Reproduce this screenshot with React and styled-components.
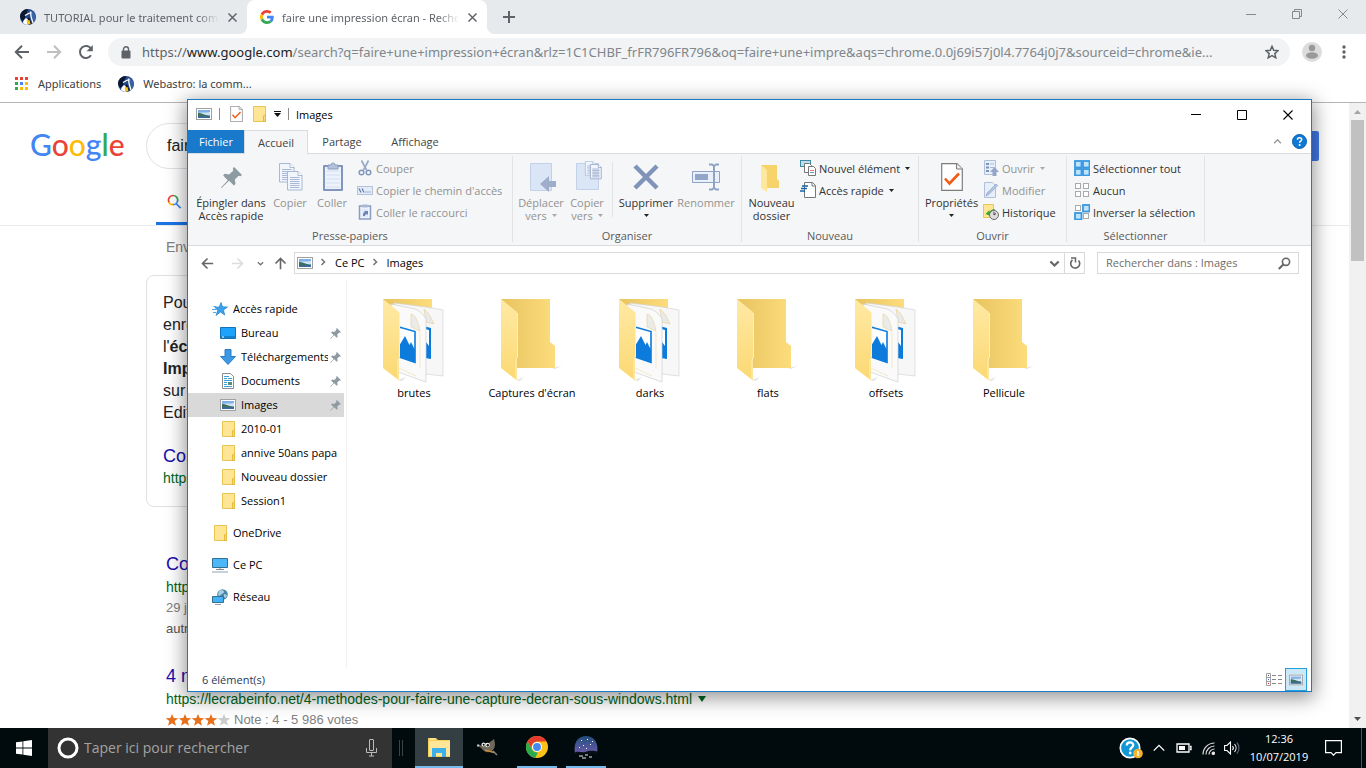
import styled, { createGlobalStyle, css } from "styled-components";

const GlobalStyle = createGlobalStyle`
  * { box-sizing: border-box; }
  body { margin: 0; background: #fff; }
  button, input { font: inherit; color: inherit; }
  button { border: 0; background: none; padding: 0; }
  h3, p, ul { margin: 0; padding: 0; font-weight: normal; }
  ul { list-style: none; }
  a { text-decoration: none; color: inherit; }
  svg { display: block; flex: none; }
`

const ui = `"Open Sans", "Noto Sans", sans-serif`
const noto = `"Noto Sans", "Open Sans", sans-serif`
const arial = `"Liberation Sans", Arial, sans-serif`

const Desktop = styled.div`
  position: relative;
  display: flex;
  flex-direction: column;
  height: 100vh;
  overflow: hidden;
  font-family: ${ui};
  font-size: 11px;
`

/* ---------- Chrome ---------- */

const Browser = styled.div`
  flex: 1;
  min-height: 0;
  display: flex;
  flex-direction: column;
`

const TabStrip = styled.div`
  display: flex;
  align-items: center;
  height: 34px;
  padding-left: 7px;
  background: #e7eaed;
  color: #5f6368;
`

const BrowserTab = styled.div`
  position: relative;
  display: flex;
  align-items: center;
  width: 240px;
  height: 34px;
  padding: 0 10px 0 13px;
  gap: 8px;
  ${p => p.$active && css`
    background: #fff;
    border-radius: 8px 8px 0 0;
    &::before, &::after {
      content: "";
      position: absolute;
      bottom: 0;
      width: 8px;
      height: 8px;
    }
    &::before {
      left: -8px;
      background: radial-gradient(circle at 0 0, transparent 8px, #fff 8px);
    }
    &::after {
      right: -8px;
      background: radial-gradient(circle at 100% 0, transparent 8px, #fff 8px);
    }
  `}
`

const TabTitle = styled.span`
  flex: 1;
  overflow: hidden;
  white-space: nowrap;
  font-family: ${noto};
  mask-image: linear-gradient(90deg, #000 88%, transparent);
`

const IconButton = styled.button`
  display: flex;
  align-items: center;
  justify-content: center;
  flex: none;
  width: ${p => p.$w || 16}px;
  height: ${p => p.$h || 16}px;
`

const CaptionButtons = styled.div`
  display: flex;
  align-self: flex-start;
  margin-left: auto;
`

const Toolbar = styled.div`
  display: flex;
  align-items: center;
  height: 36px;
  padding: 0 4px 0 6px;
`

const Omnibox = styled.div`
  display: flex;
  align-items: center;
  flex: 1;
  min-width: 0;
  height: 28px;
  margin: 0 8px 0 6px;
  padding: 0 11px 0 13px;
  gap: 11px;
  border-radius: 14px;
  background: #f1f3f4;
  font-family: ${noto};
  font-size: 13px;
  color: #80868b;
`

const Url = styled.span`
  flex: 1;
  overflow: hidden;
  white-space: nowrap;
  text-overflow: ellipsis;
  b { font-weight: normal; color: #202124; }
  i { font-style: normal; color: #5f6368; }
`

const Bookmarks = styled.div`
  display: flex;
  align-items: center;
  height: 33px;
  padding: 0 15px 5px;
  gap: 17px;
  border-bottom: 1px solid #b6b4b6;
  font-family: ${noto};
  color: #3c4043;
`

const Bookmark = styled.a`
  display: flex;
  align-items: center;
  gap: 9px;
`

const Viewport = styled.div`
  flex: 1;
  min-height: 0;
  display: flex;
`

const Page = styled.main`
  flex: 1;
  min-width: 0;
  overflow: hidden;
  font-family: ${arial};
  font-size: 14px;
`

const GoogleHeader = styled.header`
  display: flex;
  align-items: center;
  height: 83px;
  padding: 2px 30px 0;
`

const GoogleLogo = styled.a`
  width: 116px;
  padding-bottom: 3px;
  font-family: Lato, sans-serif;
  font-size: 30px;
  font-weight: 500;
  line-height: 36px;
`

const Letter = styled.span`
  color: ${p => p.$c};
`

const GoogleField = styled.input`
  flex: 1;
  min-width: 0;
  height: 46px;
  padding: 0 20px;
  border: 1px solid #dfe1e5;
  border-radius: 23px;
  font-size: 16px;
  color: #222;
`

const SignIn = styled.button`
  width: 60px;
  height: 30px;
  margin-left: 40px;
  border-radius: 2px;
  background: #4279e8;
`

const GoogleTabs = styled.nav`
  display: flex;
  height: 40px;
  padding-left: 156px;
  border-bottom: 1px solid #ebebeb;
`

const GoogleTab = styled.a`
  display: flex;
  align-items: center;
  width: 72px;
  padding: 0 0 5px 11px;
  border-bottom: 3px solid #1a73e8;
`

const Results = styled.div`
  display: flex;
  flex-direction: column;
  padding-left: 166px;
  white-space: nowrap;
`

const Stats = styled.p`
  height: 49px;
  line-height: 43px;
  color: #808080;
`

const Snippet = styled.section`
  width: 652px;
  height: 232px;
  margin: 0 0 44px -20px;
  padding: 16px;
  border: 1px solid #dfe1e5;
  border-radius: 8px;
  font-size: 16px;
  line-height: 22px;
  color: #222;
  span { display: block; }
`

const Result = styled.section`
  margin-bottom: 24px;
  h3 { font-size: 18px; line-height: 26px; color: #1a0dab; }
`

const ResultUrl = styled.p`
  display: flex;
  align-items: center;
  gap: 6px;
  font-size: 14px;
  line-height: 20px;
  color: #006621;
`

const ResultText = styled.p`
  display: flex;
  align-items: center;
  gap: 3px;
  font-size: 13px;
  line-height: 21px;
  color: ${p => (p.$dim ? "#808080" : "#545454")};
`

const SnippetLink = styled.div`
  margin-top: 20px;
  h3 { font-size: 18px; line-height: 24px; color: #1a0dab; }
`

const ScrollBar = styled.div`
  display: flex;
  flex-direction: column;
  align-items: center;
  justify-content: space-between;
  width: 17px;
  background: #f1f1f1;
`

const ScrollTop = styled.div`
  display: flex;
  flex-direction: column;
  align-items: center;
`

const Thumb = styled.div`
  width: 13px;
  height: 141px;
  background: #c1c1c1;
`

/* ---------- Explorer ---------- */

const Explorer = styled.section`
  position: absolute;
  top: 99px;
  right: 54px;
  bottom: 76px;
  left: 187px;
  display: flex;
  flex-direction: column;
  border: 1px solid #1979ca;
  background: #fff;
  color: #000;
  box-shadow: 0 4px 18px 2px rgba(0, 0, 0, 0.42);
`

const TitleBar = styled.div`
  display: flex;
  align-items: center;
  height: 30px;
  padding: 0 0 2px 8px;
`

const Divider = styled.span`
  width: 1px;
  height: 12px;
  margin: 0 ${p => p.$gap}px;
  background: #8c8c8c;
`

const RibbonTabs = styled.div`
  display: flex;
  align-items: flex-end;
  height: 24px;
  border-bottom: 1px solid #dadbdc;
`

const RibbonTab = styled.button`
  height: 23px;
  width: ${p => p.$w}px;
  color: #444;
  ${p => p.$file && css`
    background: #1979ca;
    color: #fff;
  `}
  ${p => p.$active && css`
    height: 24px;
    margin-bottom: -1px;
    border: 1px solid #dadbdc;
    border-bottom: 0;
    background: #f5f6f7;
  `}
`

const TabsEnd = styled.div`
  display: flex;
  align-items: center;
  gap: 10px;
  height: 24px;
  margin-left: auto;
  padding-right: 4px;
`

const Ribbon = styled.div`
  display: flex;
  height: 92px;
  padding: 2px 0 3px;
  border-bottom: 1px solid #dadbdc;
  background: #f5f6f7;
`

const Group = styled.div`
  display: flex;
  flex-direction: column;
  justify-content: space-between;
  width: ${p => p.$w}px;
  border-right: 1px solid #e2e3e4;
`

const GroupBody = styled.div`
  display: flex;
  padding: 1px 4px 0;
`

const GroupLabel = styled.div`
  line-height: 12px;
  text-align: center;
  color: #5a5a5a;
`

const BigButton = styled.button`
  display: flex;
  flex-direction: column;
  align-items: center;
  width: ${p => p.$w}px;
  padding-top: 4px;
  gap: 3px;
  line-height: 13px;
  white-space: nowrap;
  color: ${p => (p.disabled ? "#929292" : "#333")};
`

const BigLabel = styled.span`
  display: flex;
  flex-direction: column;
  align-items: center;
`

const WithArrow = styled.span`
  display: flex;
  align-items: center;
  justify-content: center;
  gap: 5px;
  min-height: 13px;
`

const Column = styled.div`
  display: flex;
  flex-direction: column;
`

const SmallButton = styled.button`
  display: flex;
  align-items: center;
  height: 22px;
  gap: 3px;
  padding: 0 3px;
  white-space: nowrap;
  color: ${p => (p.disabled ? "#929292" : "#333")};
`

const RibbonSplit = styled.span`
  width: 1px;
  height: 55px;
  margin: 5px 3px 0;
  background: #e2e3e4;
`

const AddressRow = styled.div`
  display: flex;
  align-items: center;
  height: 34px;
  padding: 0 12px 0 6px;
`

const Address = styled.div`
  display: flex;
  align-items: center;
  flex: 1;
  height: 22px;
  margin-right: 12px;
  padding-left: 2px;
  border: 1px solid #d9d9d9;
`

const Crumb = styled.a`
  padding-bottom: 2px;
`

const CrumbArrow = styled.button`
  padding: 0 8px 2px 6px;
`

const Refresh = styled.button`
  display: flex;
  align-items: center;
  justify-content: center;
  width: 20px;
  height: 20px;
  border-left: 1px solid #d9d9d9;
`

const SearchBox = styled.label`
  display: flex;
  align-items: center;
  width: 202px;
  height: 22px;
  padding: 0 7px 0 8px;
  border: 1px solid #d9d9d9;
`

const SearchInput = styled.input`
  flex: 1;
  min-width: 0;
  padding: 0 0 1px;
  border: 0;
  background: none;
  &::placeholder { color: ${p => p.$hint}; opacity: 1; }
`

const Body = styled.div`
  flex: 1;
  min-height: 0;
  display: flex;
`

const Nav = styled.nav`
  width: 159px;
  padding: 17px 2px 0 0;
  border-right: 1px solid #f2f2f2;
`

const NavRow = styled.a`
  display: flex;
  align-items: center;
  height: 24px;
  padding: 0 3px 0 ${p => (p.$root ? 24 : 32)}px;
  gap: 5px;
  margin-top: ${p => (p.$spaced ? 8 : 0)}px;
  background: ${p => (p.$selected ? "#d9d9d9" : "none")};
`

const NavLabel = styled.span`
  flex: 1;
  margin-right: -3px;
  padding-bottom: 2px;
  overflow: hidden;
  white-space: nowrap;
`

const Files = styled.ul`
  flex: 1;
  display: flex;
  flex-wrap: wrap;
  align-content: flex-start;
  padding: 18px 8px;
`

const FileItem = styled.li`
  display: flex;
  flex-direction: column;
  align-items: center;
  width: 118px;
  gap: 2px;
  line-height: 16px;
`

const StatusBar = styled.div`
  display: flex;
  align-items: center;
  height: 23px;
  padding: 0 4px 0 14px;
  color: #1e395b;
`

const ViewButton = styled.button`
  display: flex;
  align-items: center;
  justify-content: center;
  width: 22px;
  height: 23px;
  border: 1px solid ${p => (p.$on ? "#26a0da" : "transparent")};
  background: ${p => (p.$on ? "#cce8f6" : "none")};
`

const ViewButtons = styled.div`
  display: flex;
  margin-left: auto;
`

/* ---------- Taskbar ---------- */

const Taskbar = styled.footer`
  display: flex;
  align-items: stretch;
  height: 40px;
  background: #010b0e;
  color: #fff;
`

const StartButton = styled.button`
  display: flex;
  align-items: center;
  justify-content: center;
  width: 48px;
`

const Cortana = styled.label`
  display: flex;
  align-items: center;
  width: 344px;
  padding: 0 15px 0 9px;
  gap: 5px;
  background: #333;
  font-size: 14px;
  color: #a3a3a3;
`

const Grip = styled.span`
  align-self: center;
  width: 4px;
  height: 16px;
  margin: 0 12px 0 7px;
  border: 1px solid #3b4548;
  border-width: 0 1px;
`

const TaskButton = styled.button`
  display: flex;
  align-items: center;
  justify-content: center;
  width: 48px;
  background: ${p => (p.$active ? "#333f42" : "none")};
  border-bottom: 2px solid ${p => (p.$active ? "#76b9ed" : "transparent")};
`

const RunningButton = styled(TaskButton)`
  width: 40px;
  margin: 0 3px 0 6px;
  border-color: #76b9ed;
`

const Tray = styled.div`
  display: flex;
  align-items: center;
  margin-left: auto;
`

const Clock = styled.div`
  width: 70px;
  text-align: center;
  line-height: 18px;
`

const ShowDesktop = styled.button`
  align-self: stretch;
  width: 5px;
  margin-left: 9px;
  border-left: 1px solid #4d5456;
`

/* ---------- Icons ---------- */

const Caret = ({ color = "#222" }) => (
  <svg width="5" height="3" viewBox="0 0 5 3"><path d="M0 0h5L2.5 3z" fill={color} /></svg>
)

const Chevron = ({ dir = "down", size = 8, color = "#777", w = 1.6 }) => {
  const d = { down: "M1 2.5 4 5.5 7 2.5", right: "M2.5 1 5.5 4 2.5 7", up: "M1 5.5 4 2.5 7 5.5" }[dir]
  return <svg width={size} height={size} viewBox="0 0 8 8"><path d={d} fill="none" stroke={color} strokeWidth={w} /></svg>
}

const Close = ({ size = 9, color = "#5f6368", w = 1.6 }) => (
  <svg width={size} height={size} viewBox="0 0 10 10"><path d="M.5.5l9 9M9.5.5l-9 9" stroke={color} strokeWidth={w} fill="none" /></svg>
)

const Arrow = ({ color = "#5f6368", turn = 0, w = 2, size = 16 }) => (
  <svg width={size} height={size} viewBox="0 0 16 16">
    <g transform={`rotate(${turn} 8 8)`}>
      <path d="M15 8H2M8 1.8 1.8 8 8 14.2" fill="none" stroke={color} strokeWidth={w} />
    </g>
  </svg>
)

const AstroIcon = () => (
  <svg width="16" height="16" viewBox="0 0 16 16">
    <circle cx="8" cy="8" r="8" fill="#24488a" />
    <path d="M0 8a8 8 0 0 1 8-8C7 4 5 7 4 13A8 8 0 0 1 0 8" fill="#0c1730" />
    <path d="M11 1.500a7.500 7.500 0 0 1 3 11.500l-2.500-6z" fill="#3a63a8" />
    <path d="M5 6.500 9.500 4M10.500 4l.8 4.500 1.700 5.500" stroke="#fff" strokeWidth="1.300" fill="none" />
    <path d="M10 2.200l1.800.8-.8 2.800-1.800-1z" fill="#e8eef7" />
    <path d="M7 10.500l2-2.500 2.500 6.500-3.500 1.400z" fill="#101724" />
    <path d="M3.500 11.500 6 9l2 1.500-1 3 1.500 2.400A8 8 0 0 1 3 14z" fill="#fff" />
    <path d="M6.500 11.500l3-.5 1 4-3 .8z" fill="#f5c518" />
  </svg>
)

const GoogleG = () => (
  <svg width="14" height="14" viewBox="0 0 48 48">
    <path fill="#EA4335" d="M24 9.500c3.540 0 6.710 1.220 9.210 3.600l6.850-6.850C35.900 2.380 30.470 0 24 0 14.620 0 6.510 5.380 2.560 13.220l7.980 6.190C12.430 13.720 17.740 9.500 24 9.500z" />
    <path fill="#4285F4" d="M46.980 24.550c0-1.570-.15-3.090-.38-4.550H24v9.020h12.940c-.58 2.960-2.260 5.480-4.780 7.180l7.730 6c4.510-4.180 7.090-10.360 7.090-17.650z" />
    <path fill="#FBBC05" d="M10.530 28.590a14.500 14.500 0 0 1 0-9.180l-7.980-6.190a24 24 0 0 0 0 21.560z" />
    <path fill="#34A853" d="M24 48c6.480 0 11.930-2.130 15.890-5.810l-7.730-6c-2.150 1.450-4.920 2.300-8.160 2.300-6.260 0-11.570-4.220-13.470-9.910l-7.980 6.190C6.510 42.620 14.620 48 24 48z" />
  </svg>
)

const ReloadIcon = () => (
  <svg width="16" height="16" viewBox="0 0 16 16">
    <path d="M13 11.300A6 6 0 1 1 13.200 5" fill="none" stroke="#5f6368" strokeWidth="2" />
    <path d="M14.800 1v6.200H8.600z" fill="#5f6368" />
  </svg>
)

const LockIcon = () => (
  <svg width="10" height="13" viewBox="0 0 10 13">
    <rect x="0.500" y="4.500" width="9" height="8" rx="1" fill="#5f6368" />
    <path d="M2.500 5V3.300a2.500 2.500 0 0 1 5 0V5" fill="none" stroke="#5f6368" strokeWidth="1.400" />
  </svg>
)

const StarOutline = () => (
  <svg width="14" height="14" viewBox="0 0 14 14">
    <path d="M7 1.300l1.700 4 4.300.4-3.200 2.900 1 4.200L7 10.600l-3.800 2.200 1-4.200L1 5.700l4.300-.4z" fill="none" stroke="#5f6368" strokeWidth="1.500" />
  </svg>
)

const Avatar = () => (
  <svg width="20" height="20" viewBox="0 0 20 20">
    <circle cx="10" cy="10" r="10" fill="#dcdcdc" />
    <circle cx="10" cy="6" r="3.200" fill="#999" />
    <ellipse cx="10" cy="13.500" rx="6" ry="3.300" fill="#999" />
  </svg>
)

const DotsIcon = () => (
  <svg width="4" height="14" viewBox="0 0 4 14" fill="#5f6368">
    <circle cx="2" cy="2" r="1.700" /><circle cx="2" cy="7" r="1.700" /><circle cx="2" cy="12" r="1.700" />
  </svg>
)

const AppsIcon = () => {
  const colors = ["#ea4335", "#ea4335", "#ea4335", "#34a853", "#4285f4", "#fbbc05", "#34a853", "#fbbc05", "#fbbc05"]
  return (
    <svg width="14" height="14" viewBox="0 0 14 14">
      {colors.map((c, i) => <rect key={i} x={(i % 3) * 5} y={Math.floor(i / 3) * 5} width="3" height="3" fill={c} />)}
    </svg>
  )
}

const SearchColor = () => (
  <svg width="15" height="15" viewBox="0 0 15 15" fill="none" strokeWidth="1.700">
    <path d="M2.200 8.500A4.600 4.600 0 0 1 6 1.500" stroke="#ea4335" />
    <path d="M6 1.500a4.600 4.600 0 0 1 4.600 5.500" stroke="#34a853" />
    <path d="M10.600 6.500A4.600 4.600 0 0 1 6 10.700M9 9.500l4.700 4.700" stroke="#4285f4" />
    <path d="M6 10.700A4.600 4.600 0 0 1 1.800 8" stroke="#fbbc05" />
  </svg>
)

const Stars = () => (
  <svg width="65" height="12" viewBox="0 0 65 12">
    {[0, 1, 2, 3, 4].map(i => (
      <path key={i} transform={`translate(${i * 13} 0)`} fill={i < 4 ? "#e7711b" : "#ccc"}
        d="M6 0l1.700 4.100 4.600.2-3.600 2.800L10 11.800 6 9.200l-4 2.600L3.300 7.100-.3 4.300l4.600-.2z" />
    ))}
  </svg>
)

const PictureIcon = ({ size = 16 }) => (
  <svg width={size} height={size} viewBox="0 0 16 16">
    <rect x="0.500" y="2.500" width="15" height="11" fill="#fff" stroke="#a0a0a0" />
    <rect x="2" y="4" width="12" height="8" fill="#7fb0e8" />
    <path d="M2 7c4-1 8 0 12-1v3H2z" fill="#cfe4f5" />
    <path d="M2 7c3 0 6 1.500 12 3v2H2z" fill="#3f6f5d" />
    <path d="M2 10.500c4-.5 8 0 12 0V12H2z" fill="#3b6a9c" />
  </svg>
)

const FolderSmall = () => (
  <svg width="16" height="16" viewBox="0 0 16 16">
    <path d="M2.500.500h12v15h-12z" fill="#ffe594" stroke="#e8c552" />
    <path d="M12.500 15.500V10l1-1h1v6.500z" fill="#fadb7a" stroke="#e3b93f" />
  </svg>
)

const CheckDoc = ({ w = 13, h = 16 }) => (
  <svg width={w} height={h} viewBox="0 0 22 28">
    <path d="M.700.700H16l5.300 5.300v21.300H.700z" fill="#fff" stroke="#7d7d7d" strokeWidth="1.200" />
    <path d="M15.500.700V6h6" fill="#eee" stroke="#7d7d7d" />
    <path d="M4 15.500l4.500 5L18 10.500" fill="none" stroke="#f25c19" strokeWidth="2.600" />
  </svg>
)

const CustomizeIcon = () => (
  <svg width="7" height="6" viewBox="0 0 7 6"><path d="M0 0h7v1H0zM0 2h7L3.500 6z" fill="#111" /></svg>
)

const HelpIcon = () => (
  <svg width="15" height="15" viewBox="0 0 15 15">
    <circle cx="7.500" cy="7.500" r="7" fill="#0f78d4" stroke="#0b5ea8" />
    <path d="M5.400 5.700c0-2.700 4.300-2.700 4.300-.2 0 1.600-2.100 1.500-2.100 3.200" fill="none" stroke="#fff" strokeWidth="1.500" />
    <circle cx="7.600" cy="11" r="1" fill="#fff" />
  </svg>
)

const PinIcon = ({ size = 10 }) => (
  <svg width={size} height={size} viewBox="0 0 20 20">
    <path d="M12.500 0 20 7.500l-1.500 1.200-1.700-.3-3.600 3.600.6 4.200-1.500 1.500-4.600-4.600L.5 20 0 19.500l6.500-7L2 8l1.500-1.500 4.200.7 3.900-3.700L11.300 1.300z" fill="#8e9aa2" />
  </svg>
)

const PageLines = ({ x, y, rows = 6, s = "#a7b9d4" }) => (
  <g transform={`translate(${x} ${y})`}>
    <path d="M.500.500H11l4 4v14.500H.500z" fill="#f2f6fc" stroke={s} />
    <path d="M11 .500v4h4" fill="#fff" stroke={s} />
    {Array.from({ length: rows }, (_, i) => <path key={i} d={`M3 ${6.5 + i * 2}h9.500`} stroke={s} />)}
  </g>
)

const CopyIcon = () => (
  <svg width="26" height="28" viewBox="0 0 26 28"><PageLines x={1} y={0} /><PageLines x={9} y={8} /></svg>
)

const PasteIcon = () => (
  <svg width="22" height="30" viewBox="0 0 22 30">
    <rect x="1" y="3" width="20" height="26" rx="1" fill="#8296bd" />
    <rect x="3" y="5" width="16" height="22" fill="#edf3fc" />
    <path d="M4 9h14M4 13h14M4 17h14M4 21h14M4 25h14" stroke="#d0def2" />
    <path d="M6 3h3a2 2 0 0 1 4 0h3v4H6z" fill="#b3c1da" stroke="#8c9dbf" />
  </svg>
)

const ScissorsIcon = () => (
  <svg width="16" height="16" viewBox="0 0 16 16" fill="none">
    <path d="M4.500.500 9.500 10M11.500.500 6.500 10" stroke="#9aabc8" strokeWidth="1.700" />
    <circle cx="4.500" cy="12.500" r="2.300" stroke="#8296bd" strokeWidth="1.500" />
    <circle cx="11.500" cy="12.500" r="2.300" stroke="#8296bd" strokeWidth="1.500" />
  </svg>
)

const PathIcon = () => (
  <svg width="16" height="16" viewBox="0 0 16 16">
    <rect x="0.500" y="4.500" width="15" height="8" fill="#e3ebf7" stroke="#b4c2dc" />
    <path d="M2 6.500l2 4M5 6.500l2 4M8.500 10h1M10.500 10h1M12.500 10h1" stroke="#6279a8" strokeWidth="1.200" />
  </svg>
)

const ShortcutIcon = () => (
  <svg width="16" height="16" viewBox="0 0 16 16">
    <path d="M2.500 2h11v13h-11z" fill="#edf3fc" stroke="#8c9dbf" strokeWidth="1.500" />
    <path d="M5.500.500h5v3h-5z" fill="#a9b8d4" />
    <rect x="5" y="5" width="6" height="8" fill="#dfe8f6" />
    <path d="M6 12c0-3 .500-3.500 2-4L7 7h4v4l-1-1c-1.500 0-2 1-2 2z" fill="#6d83b0" />
  </svg>
)

const MoveIcon = () => (
  <svg width="28" height="30" viewBox="0 0 28 30">
    <path d="M1.500 1.500h21v27h-21z" fill="#dae5f5" stroke="#c3d1e8" />
    <path d="M20 14v5h7v6h-7v5l-9-8z" fill="#9dadca" />
  </svg>
)

const CopyToIcon = () => (
  <svg width="28" height="30" viewBox="0 0 28 30">
    <path d="M1.500 2.500h22v26h-22z" fill="#dae5f5" stroke="#c3d1e8" />
    <g transform="translate(10 0) scale(.7 .75)"><PageLines x={0} y={0} /></g>
    <g transform="translate(15 3) scale(.75 .78)"><PageLines x={0} y={0} s="#8c9fc4" /></g>
  </svg>
)

const DeleteIcon = () => (
  <svg width="28" height="28" viewBox="0 0 28 28"><path d="M3 3l22 22M25 3 3 25" stroke="#8093b8" strokeWidth="4.500" /></svg>
)

const RenameIcon = () => (
  <svg width="28" height="28" viewBox="0 0 28 28">
    <path d="M.500 8.500h27v11H.500z" fill="#e9f0fa" stroke="#8fa3c7" />
    <rect x="3" y="11" width="13" height="6" fill="#93a6ca" />
    <path d="M17 1.500h3l2 1.500 2-1.500h3M17 26.500h3l2-1.500 2 1.500h3M22 3v22" fill="none" stroke="#8fa3c7" strokeWidth="2" />
  </svg>
)

const NewFolderIcon = () => (
  <svg width="20" height="28" viewBox="0 0 20 28">
    <path d="M1 1h16v14l2 2v7H1z" fill="#f6d36b" />
    <path d="M1 1l6 5v22l-6-4z" fill="#ffe89c" />
  </svg>
)

const NewItemIcon = () => (
  <svg width="16" height="16" viewBox="0 0 16 16">
    <rect x="0.500" y="0.500" width="10" height="6" fill="#bfe0ea" stroke="#3f88a3" />
    <path d="M4.500 3.500h5l2 2v7h-7z" fill="#fff" stroke="#777" />
    <path d="M8.500 6.500h5l2 2v7h-7z" fill="#fff" stroke="#777" />
    <path d="M10 10.500h4" stroke="#e77" /><path d="M10 12.500h4" stroke="#69c" />
  </svg>
)

const EasyIcon = () => (
  <svg width="16" height="16" viewBox="0 0 16 16">
    <path d="M4.500.500h8l3 3v12h-11z" fill="#fff" stroke="#777" />
    <path d="M12 .500v3.500h3.500" fill="none" stroke="#777" />
    <path d="M2 4h6M1 6.500h6M0 9h5" stroke="#1763a6" strokeWidth="1.400" />
  </svg>
)

const OpenIcon = () => (
  <svg width="16" height="16" viewBox="0 0 16 16">
    <path d="M1.500.500h11v14h-11z" fill="#e7effa" stroke="#b1c0da" />
    <path d="M3 3h3v2H3zM3 6.500h3v2H3zM3 10h3v2H3z" fill="#7f93b8" />
    <path d="M7 4h4M7 7.500h4" stroke="#a9b8d4" />
    <path d="M11.500 7 16 12h-2.500v4h-4v-4H7z" fill="#93a5c8" />
  </svg>
)

const EditIcon = () => (
  <svg width="16" height="16" viewBox="0 0 16 16">
    <path d="M1.500.500h8l3 3v12h-11z" fill="#e7effa" stroke="#b1c0da" />
    <path d="M3 14l1-3L13 2l1.800 1.500-9 9z" fill="#b4c4e0" stroke="#93a5c8" strokeWidth=".7" />
  </svg>
)

const HistoryIcon = () => (
  <svg width="16" height="16" viewBox="0 0 16 16">
    <path d="M.500.500h10v13H.500z" fill="#ffe594" stroke="#e8c552" />
    <path d="M2.500 10 6.500 6v2c2-3 4-3 6-3-2 1-4 3-5 6l1 1.500z" fill="#3ba531" />
    <circle cx="11" cy="11" r="4.500" fill="#ddd" stroke="#6c6c6c" />
    <path d="M11 8v3l2-1.500" stroke="#444" fill="none" />
  </svg>
)

// small 2x2 grid, `on` lists the filled cells
const SelectIcon = ({ on }) => (
  <svg width="16" height="16" viewBox="0 0 16 16">
    {[[0, 0], [8, 0], [0, 8], [8, 8]].map(([x, y], i) => on.includes(i)
      ? <rect key={i} x={x + 1} y={y + 1} width="6.500" height="6.500" fill="#bfe3fb" stroke="#3898e0" strokeWidth="1.800" />
      : <rect key={i} x={x + 1.5} y={y + 1.5} width="5" height="5" fill="#fff" stroke="#aaa" />
    )}
  </svg>
)

const StarIcon = () => (
  <svg width="16" height="16" viewBox="0 0 16 16">
    <path d="M9 1.500l1.500 4.300 5 .2-4 3 1.200 5L8.500 11l-4.500 3.500L5.700 9.500 3 6.500l4.300-.5z" fill="#3aa0ec" stroke="#1f7fc8" strokeWidth=".7" />
    <path d="M1.500 5.500h3M0 8.500h4M1 11.500h3" stroke="#4fa9e6" />
  </svg>
)

const DesktopIcon = () => (
  <svg width="16" height="16" viewBox="0 0 16 16">
    <path d="M.500 2.500h15v11H.500z" fill="#1ea2fb" stroke="#1172b8" />
    <path d="M1 12h14" stroke="#0d5e9c" /><path d="M2 12h2" stroke="#fff" />
  </svg>
)

const DownloadIcon = () => (
  <svg width="16" height="16" viewBox="0 0 16 16">
    <path d="M5 .500h6v7h4.500L8 15.500.500 7.500H5z" fill="#3d98e4" stroke="#2d7dc4" />
  </svg>
)

const DocumentIcon = () => (
  <svg width="16" height="16" viewBox="0 0 16 16">
    <path d="M2.500.500h8l3 3v12h-11z" fill="#fff" stroke="#8b8b8b" />
    <path d="M4 3.500h5M4 5.500h3M8 5.500h4M4 7.500h8M4 9.500h3M4 11.500h3M4 13.500h8" stroke="#3aa0d8" />
    <rect x="8" y="9" width="4" height="3" fill="#5c8a72" />
  </svg>
)

const PcIcon = () => (
  <svg width="16" height="16" viewBox="0 0 16 16">
    <path d="M.500 1.500h15v9H.500z" fill="#4cb8f8" stroke="#31708f" />
    <path d="M8 11v2M4 12.500h8" stroke="#888" /><path d="M0 15h16" stroke="#8fa3b3" />
  </svg>
)

const NetworkIcon = () => (
  <svg width="16" height="16" viewBox="0 0 16 16">
    <circle cx="10.500" cy="5.500" r="5.300" fill="#4b86a6" />
    <path d="M7 2c2-2 5-1 5 1s-3 1-4 4l-2-1zM12 5l3 1-1 3-2-1z" fill="#a8d0e2" />
    <path d="M.500 7.500h11v6H.500z" fill="#43b2f6" stroke="#31708f" />
    <path d="M3 15.500h6" stroke="#8fa3b3" />
  </svg>
)

const BigFolder = ({ pictures }) => (
  <svg width="64" height="85" viewBox="0 0 64 85">
    <defs>
      <linearGradient id="back" x1="0" x2="1"><stop offset="0" stopColor="#e8c460" /><stop offset="1" stopColor="#fcdc7c" /></linearGradient>
      <linearGradient id="front" x1="0" y1="0" x2="0" y2="1"><stop offset="0" stopColor="#ffe9a4" /><stop offset="1" stopColor="#fbd872" /></linearGradient>
    </defs>
    <path d="M52 70l10-2-7 3zM16 82l8-3-4 4z" fill="#e4e4e4" />
    <path d={pictures ? "M1 1h49v68H1z" : "M1 1h49v43l5 4v22H1z"} fill="url(#back)" />
    {pictures && (
      <>
        <path d="M12 5l32 4 17 3v66l-17-2z" fill="#f7f7f7" stroke="#d4d4d4" strokeWidth=".7" />
        <path d="M42 11c4 3 7 8 10 15l-8-2z" fill="#e9e9e9" stroke="#e6d08a" strokeWidth=".6" />
        <path d="M43 28.500l6 1.500v31l-6-1z" fill="#0c7bdc" /><path d="M43 31l4 1v16l-3-4-1 3z" fill="#fff" />
        <path d="M9 6l24 5c5 2 8 5 11 10v63l-28-10z" fill="#fafafa" stroke="#cfcfcf" strokeWidth=".7" />
        <path d="M29 16c5 1 7 8 9 17l-9-4z" fill="#ebebeb" stroke="#e6d08a" strokeWidth=".6" />
        <path d="M38 34v36M17 70l17 8" stroke="#ecdca6" strokeWidth=".6" />
        <path d="M17 29l16 4.500v31L17 59z" fill="#fff" stroke="#0c7bdc" strokeWidth="1.600" />
        <path d="M17 48l6-10 4.500 9 1.500-3 4 8v12.500L17 59z" fill="#0c7bdc" />
      </>
    )}
    <path d="M1 1l16 13v68.500L1 70z" fill="url(#front)" />
    <path d="M17.500 15v44l-1.500 3v20" fill="none" stroke="#fdf0bf" />
  </svg>
)

const ListViewIcon = () => (
  <svg width="17" height="13" viewBox="0 0 17 13">
    <path d="M.500.500h4v12h-4zM.500 4.500h4M.500 8.500h4" fill="#fff" stroke="#a0a0a0" />
    <path d="M6 2.500h4M12 2.500h4M6 6.500h4M12 6.500h4M6 10.500h4M12 10.500h4" stroke="#888" />
    <path d="M2 2h1v1H2z" fill="#555" /><path d="M2 6h1v1H2z" fill="#36f" /><path d="M2 10h1v1H2z" fill="#e22" />
  </svg>
)

const Magnifier = () => (
  <svg width="13" height="13" viewBox="0 0 13 13">
    <circle cx="8" cy="4.800" r="3.600" fill="none" stroke="#666" strokeWidth="1.600" />
    <path d="M5.500 7.300.800 12" stroke="#666" strokeWidth="2" />
  </svg>
)

const RefreshIcon = () => (
  <svg width="12" height="12" viewBox="0 0 12 12">
    <path d="M9.500 3.500A4.500 4.500 0 1 1 3.500 3" fill="none" stroke="#666" strokeWidth="1.600" />
    <path d="M2 1h4.500v4.500" fill="none" stroke="#666" strokeWidth="1.500" />
  </svg>
)

const WindowsIcon = () => (
  <svg width="16" height="16" viewBox="0 0 16 16">
    <path d="M0 2.300 6.500 1.400V7.600H0zM7.300 1.300 16 0v7.600H7.300zM0 8.400h6.500v6.200L0 13.700zM7.300 8.400H16V16l-8.700-1.300z" fill="#fff" />
  </svg>
)

const MicIcon = () => (
  <svg width="11" height="18" viewBox="0 0 11 18" fill="none" stroke="#bbb">
    <rect x="3.500" y="0.500" width="4" height="11" rx="0.500" />
    <path d="M.500 9v4.500h10V9M5.500 13.500V17M3 17h5" />
  </svg>
)

const FilesTask = () => (
  <svg width="22" height="20" viewBox="0 0 22 20">
    <path d="M0 1h8l2 2h12v17H0z" fill="#f6cf57" />
    <path d="M1 4h21v15H1z" fill="#ffe698" />
    <path d="M2 2h5" stroke="#fff6d6" />
    <path d="M4 20v-9h14v9h-4v-4H8v4z" fill="#3cb0ea" />
  </svg>
)

const GimpIcon = () => (
  <svg width="24" height="20" viewBox="0 0 24 20">
    <path d="M3 8c3 1 5 0 7-2l3 .5L19 2c1.500 5 1.500 9-2 12-4 2.500-8 1-10-2-1-1.500-3-2-4-4z" fill="#6f685b" />
    <circle cx="8.500" cy="7.500" r="2" fill="#eee" /><circle cx="12.500" cy="8" r="2.300" fill="#eee" />
    <circle cx="8.700" cy="7.700" r="1" fill="#111" /><circle cx="12.800" cy="8.200" r="1.200" fill="#111" />
    <circle cx="3.200" cy="8.500" r="1.300" fill="#bbb" />
    <path d="M10 13l9 2.500" stroke="#c98b3c" strokeWidth="1.600" /><path d="M18 14l4 4" stroke="#888" strokeWidth="1.500" />
  </svg>
)

const ChromeIcon = () => (
  <svg width="22" height="24" viewBox="0 0 24 24">
    <circle cx="12" cy="12" r="12" fill="#fbc116" />
    <path d="M1.600 6A12 12 0 0 1 22.400 6H12a6 6 0 0 0-5.200 9z" fill="#e33b2e" />
    <path d="M1.600 6 6.800 15a6 6 0 0 0 6.200 3L10 24A12 12 0 0 1 1.600 6" fill="#2da94f" />
    <circle cx="12" cy="12" r="5.500" fill="#fff" /><circle cx="12" cy="12" r="4.300" fill="#4688f1" />
  </svg>
)

const StellariumIcon = () => (
  <svg width="24" height="24" viewBox="0 0 24 24">
    <defs><linearGradient id="night" x1="0" y1="0" x2="0" y2="1"><stop offset="0" stopColor="#1d4f7c" /><stop offset="1" stopColor="#6a5aa8" /></linearGradient></defs>
    <path d="M1 18C-1 8 4 1 12 1s13 7 11 17z" fill="url(#night)" />
    <path d="M0 18c4-3 7 0 11-1s8-2 13 0v2H0z" fill="#080f18" />
    <path d="M7 5h1v1H7zM13 4h1v1h-1zM16 9h1v1h-1zM9 10h1v1H9zM5 12h1v1H5zM18 6h1v1h-1zM12 13h1v1h-1z" fill="#fff" />
    <path d="M5 21h4M11 20h3M15 22h3M8 23h4" stroke="#eee" />
  </svg>
)

const TrayHelp = () => (
  <svg width="24" height="22" viewBox="0 0 24 22">
    <circle cx="11" cy="11" r="9.700" fill="#1597d4" stroke="#fff" strokeWidth="1.700" />
    <path d="M7.800 8.500c0-4 6.400-4 6.400-.3 0 2.300-3 2.300-3 5" fill="none" stroke="#fff" strokeWidth="2.300" />
    <circle cx="11.200" cy="16" r="1.400" fill="#fff" />
    <circle cx="19" cy="16.500" r="4.800" fill="#f5b32c" /><path d="M19 14v5" stroke="#fff" strokeWidth="1.500" />
  </svg>
)

const BatteryIcon = () => (
  <svg width="16" height="10" viewBox="0 0 16 10">
    <path d="M1 1h12v8H1zM14 3.500h1v3h-1" fill="none" stroke="#fff" strokeWidth="1.300" /><path d="M3 3h6v4H3z" fill="#fff" />
  </svg>
)

const WifiIcon = () => (
  <svg width="13" height="13" viewBox="0 0 13 13" fill="none" stroke="#ddd" strokeWidth="1.200">
    <path d="M1 12.500A11.500 11.500 0 0 1 12.500 1M4 12.500A8.500 8.500 0 0 1 12.500 4M7 12.500A5.500 5.500 0 0 1 12.500 7" />
    <circle cx="11.300" cy="11.300" r="1.200" fill="#fff" />
  </svg>
)

const VolumeIcon = () => (
  <svg width="16" height="14" viewBox="0 0 16 14" fill="none" stroke="#fff" strokeWidth="1.100">
    <path d="M.600 4.500h2.400l3.500-3.500v12L3 9.500H.600z" />
    <path d="M8.500 5a3 3 0 0 1 0 4M10.500 3a6 6 0 0 1 0 8" /><path d="M12.800 1.500a8 8 0 0 1 0 11" stroke="#667" />
  </svg>
)

const NoticeIcon = () => (
  <svg width="17" height="16" viewBox="0 0 17 16">
    <path d="M.600.600h15.800v12H11l-2.500 2.600L6 12.600H.600z" fill="none" stroke="#fff" strokeWidth="1.200" />
  </svg>
)

/* ---------- Data ---------- */

const navItems = [
  { label: "Accès rapide", icon: <StarIcon />, root: true },
  { label: "Bureau", icon: <DesktopIcon />, pin: true },
  { label: "Téléchargements", icon: <DownloadIcon />, pin: true },
  { label: "Documents", icon: <DocumentIcon />, pin: true },
  { label: "Images", icon: <PictureIcon />, pin: true, selected: true },
  { label: "2010-01", icon: <FolderSmall /> },
  { label: "annive 50ans papa", icon: <FolderSmall /> },
  { label: "Nouveau dossier", icon: <FolderSmall /> },
  { label: "Session1", icon: <FolderSmall /> },
  { label: "OneDrive", icon: <FolderSmall />, root: true, spaced: true },
  { label: "Ce PC", icon: <PcIcon />, root: true, spaced: true },
  { label: "Réseau", icon: <NetworkIcon />, root: true, spaced: true },
]

const files = [
  { name: "brutes", pictures: true },
  { name: "Captures d'écran" },
  { name: "darks", pictures: true },
  { name: "flats" },
  { name: "offsets", pictures: true },
  { name: "Pellicule" },
]

const logo = [["G", "#4285f4"], ["o", "#ea4335"], ["o", "#fbbc05"], ["g", "#4285f4"], ["l", "#34a853"], ["e", "#ea4335"]]

/* ---------- Parts ---------- */

const Big = ({ icon, lines, w, disabled, arrow }) => {
  const gray = disabled ? "#aaa" : "#222"
  return (
    <BigButton $w={w} disabled={disabled}>
      <svg width="32" height="32" viewBox="0 0 32 32"><g>{icon}</g></svg>
      <BigLabel>
        <span>{lines[0]}</span>
        {(lines[1] || arrow) && <WithArrow>{lines[1]}{arrow && <Caret color={gray} />}</WithArrow>}
      </BigLabel>
    </BigButton>
  )
}

const at = (x, y, icon) => <g transform={`translate(${x} ${y})`}>{icon}</g>

const Small = ({ icon, label, disabled, arrow }) => (
  <SmallButton disabled={disabled}>
    {icon}
    <WithArrow>{label}{arrow && <Caret color={disabled ? "#aaa" : "#222"} />}</WithArrow>
  </SmallButton>
)

const ChromeWindow = () => (
  <Browser>
    <TabStrip>
      <BrowserTab>
        <AstroIcon />
        <TabTitle>TUTORIAL pour le traitement complet</TabTitle>
        <IconButton $w={10} aria-label="Fermer l'onglet"><Close /></IconButton>
      </BrowserTab>
      <BrowserTab $active>
        <GoogleG />
        <TabTitle>faire une impression écran - Recherche</TabTitle>
        <IconButton $w={10} aria-label="Fermer l'onglet"><Close /></IconButton>
      </BrowserTab>
      <IconButton $w={43} $h={34} aria-label="Nouvel onglet">
        <svg width="12" height="12" viewBox="0 0 12 12"><path d="M6 0v12M0 6h12" stroke="#5f6368" strokeWidth="2" /></svg>
      </IconButton>
      <CaptionButtons>
        <IconButton $w={46} $h={28} aria-label="Réduire">
          <svg width="10" height="1"><path d="M0 .5h10" stroke="#888" /></svg>
        </IconButton>
        <IconButton $w={46} $h={28} aria-label="Niveau inférieur">
          <svg width="10" height="10" viewBox="0 0 10 10"><path d="M.5 2.500h7v7h-7zM2.500 2.500v-2h7v7h-2" fill="none" stroke="#888" /></svg>
        </IconButton>
        <IconButton $w={46} $h={28} aria-label="Fermer"><Close size={10} color="#888" w={1} /></IconButton>
      </CaptionButtons>
    </TabStrip>
    <Toolbar>
      <IconButton $w={32} $h={28} aria-label="Précédent"><Arrow /></IconButton>
      <IconButton $w={32} $h={28} aria-label="Suivant"><Arrow color="#bdbfc1" turn={180} /></IconButton>
      <IconButton $w={32} $h={28} aria-label="Actualiser"><ReloadIcon /></IconButton>
      <Omnibox>
        <LockIcon />
        <Url><i>https://</i><b>www.google.com</b>/search?q=faire+une+impression+écran&amp;rlz=1C1CHBF_frFR796FR796&amp;oq=faire+une+impre&amp;aqs=chrome.0.0j69i57j0l4.7764j0j7&amp;sourceid=chrome&amp;ie...</Url>
        <StarOutline />
      </Omnibox>
      <IconButton $w={28} $h={28} aria-label="Profil"><Avatar /></IconButton>
      <IconButton $w={36} $h={28} aria-label="Menu"><DotsIcon /></IconButton>
    </Toolbar>
    <Bookmarks>
      <Bookmark href="#"><AppsIcon />Applications</Bookmark>
      <Bookmark href="#"><AstroIcon />Webastro: la comm...</Bookmark>
    </Bookmarks>
    <Viewport>
      <Page>
        <GoogleHeader>
          <GoogleLogo href="#">{logo.map(([l, c], i) => <Letter key={i} $c={c}>{l}</Letter>)}</GoogleLogo>
          <GoogleField aria-label="Rechercher" defaultValue="faire une impression écran" />
          <SignIn aria-label="Connexion" />
        </GoogleHeader>
        <GoogleTabs>
          <GoogleTab href="#" aria-label="Tous"><SearchColor /></GoogleTab>
        </GoogleTabs>
        <Results>
          <Stats>Env</Stats>
          <Snippet>
            <span>Pour</span>
            <span>enreg</span>
            <span>l'<b>écr</b></span>
            <span><b>Impr</b></span>
            <span>sur</span>
            <span>Edit</span>
            <SnippetLink>
              <h3>Com</h3>
              <ResultUrl>https</ResultUrl>
            </SnippetLink>
          </Snippet>
          <Result>
            <h3>Com</h3>
            <ResultUrl>https</ResultUrl>
            <ResultText $dim>29 juil</ResultText>
            <ResultText>autre</ResultText>
          </Result>
          <Result>
            <h3>4 m</h3>
            <ResultUrl>
              https://lecrabeinfo.net/4-methodes-pour-faire-une-capture-decran-sous-windows.html
              <svg width="8" height="6" viewBox="0 0 8 6"><path d="M0 0h8L4 6z" fill="#006621" /></svg>
            </ResultUrl>
            <ResultText $dim><Stars />Note : 4 - 5 986 votes</ResultText>
          </Result>
        </Results>
      </Page>
      <ScrollBar>
        <ScrollTop>
          <svg width="17" height="17" viewBox="0 0 17 17"><path d="M5 11h7L8.500 7z" fill="#a3a3a3" /></svg>
          <Thumb />
        </ScrollTop>
        <svg width="17" height="17" viewBox="0 0 17 17"><path d="M5 6h7l-3.500 4z" fill="#505050" /></svg>
      </ScrollBar>
    </Viewport>
  </Browser>
)

const ExplorerWindow = () => (
  <Explorer>
    <TitleBar>
      <PictureIcon />
      <Divider $gap={7} />
      <IconButton $w={18} aria-label="Propriétés"><CheckDoc /></IconButton>
      <IconButton $w={28} aria-label="Nouveau dossier"><FolderSmall /></IconButton>
      <IconButton $w={8} aria-label="Personnaliser"><CustomizeIcon /></IconButton>
      <Divider $gap={7} />
      Images
      <CaptionButtons>
        <IconButton $w={46} $h={29} aria-label="Réduire"><svg width="10" height="1"><path d="M0 .5h10" stroke="#000" /></svg></IconButton>
        <IconButton $w={46} $h={29} aria-label="Agrandir"><svg width="10" height="10"><path d="M.5.5h9v9h-9z" fill="none" stroke="#000" /></svg></IconButton>
        <IconButton $w={46} $h={29} aria-label="Fermer"><Close size={10} color="#000" w={1.1} /></IconButton>
      </CaptionButtons>
    </TitleBar>
    <RibbonTabs>
      <RibbonTab $file $w={56}>Fichier</RibbonTab>
      <RibbonTab $active $w={64}>Accueil</RibbonTab>
      <RibbonTab $w={68}>Partage</RibbonTab>
      <RibbonTab $w={78}>Affichage</RibbonTab>
      <TabsEnd>
        <Chevron dir="up" size={9} color="#999" w={1.3} />
        <HelpIcon />
      </TabsEnd>
    </RibbonTabs>
    <Ribbon>
      <Group $w={325}>
        <GroupBody>
          <Big w={78} icon={at(6, 6, <PinIcon size={21} />)} lines={["Épingler dans", "Accès rapide"]} />
          <Big w={40} disabled icon={at(4, 2, <CopyIcon />)} lines={["Copier"]} />
          <Big w={44} disabled icon={at(6, 1, <PasteIcon />)} lines={["Coller"]} />
          <Column>
            <Small disabled icon={<ScissorsIcon />} label="Couper" />
            <Small disabled icon={<PathIcon />} label="Copier le chemin d'accès" />
            <Small disabled icon={<ShortcutIcon />} label="Coller le raccourci" />
          </Column>
        </GroupBody>
        <GroupLabel>Presse-papiers</GroupLabel>
      </Group>
      <Group $w={229}>
        <GroupBody>
          <Big w={48} disabled arrow icon={at(4, 1, <MoveIcon />)} lines={["Déplacer", "vers"]} />
          <Big w={44} disabled arrow icon={at(4, 0, <CopyToIcon />)} lines={["Copier", "vers"]} />
          <RibbonSplit />
          <Big w={60} arrow icon={at(2, 2, <DeleteIcon />)} lines={["Supprimer"]} />
          <Big w={60} disabled icon={at(2, 2, <RenameIcon />)} lines={["Renommer"]} />
        </GroupBody>
        <GroupLabel>Organiser</GroupLabel>
      </Group>
      <Group $w={177}>
        <GroupBody>
          <Big w={51} icon={at(4, 3, <NewFolderIcon />)} lines={["Nouveau", "dossier"]} />
          <Column>
            <Small arrow icon={<NewItemIcon />} label="Nouvel élément" />
            <Small arrow icon={<EasyIcon />} label="Accès rapide" />
          </Column>
        </GroupBody>
        <GroupLabel>Nouveau</GroupLabel>
      </Group>
      <Group $w={148}>
        <GroupBody>
          <Big w={57} arrow icon={at(5, 2, <CheckDoc w={22} h={28} />)} lines={["Propriétés"]} />
          <Column>
            <Small disabled arrow icon={<OpenIcon />} label="Ouvrir" />
            <Small disabled icon={<EditIcon />} label="Modifier" />
            <Small icon={<HistoryIcon />} label="Historique" />
          </Column>
        </GroupBody>
        <GroupLabel>Ouvrir</GroupLabel>
      </Group>
      <Group $w={138}>
        <GroupBody>
          <Column>
            <Small icon={<SelectIcon on={[0, 1, 2, 3]} />} label="Sélectionner tout" />
            <Small icon={<SelectIcon on={[]} />} label="Aucun" />
            <Small icon={<SelectIcon on={[1, 2]} />} label="Inverser la sélection" />
          </Column>
        </GroupBody>
        <GroupLabel>Sélectionner</GroupLabel>
      </Group>
    </Ribbon>
    <AddressRow>
      <IconButton $w={26} aria-label="Retour"><Arrow size={13} color="#666" /></IconButton>
      <IconButton $w={34} aria-label="Avancer"><Arrow size={13} color="#ddd" turn={180} /></IconButton>
      <IconButton $w={13} aria-label="Emplacements récents"><Chevron size={7} /></IconButton>
      <IconButton $w={27} aria-label="Dossier parent"><Arrow size={13} color="#666" turn={90} /></IconButton>
      <Address>
        <PictureIcon />
        <CrumbArrow aria-label="Emplacements"><Chevron dir="right" /></CrumbArrow>
        <Crumb href="#">Ce PC</Crumb>
        <CrumbArrow aria-label="Sous-dossiers"><Chevron dir="right" /></CrumbArrow>
        <Crumb href="#">Images</Crumb>
        <CaptionButtons>
          <IconButton $w={20} $h={20} aria-label="Adresses"><Chevron size={11} color="#666" /></IconButton>
          <Refresh aria-label="Actualiser"><RefreshIcon /></Refresh>
        </CaptionButtons>
      </Address>
      <SearchBox>
        <SearchInput $hint="#6d6d6d" aria-label="Rechercher" placeholder="Rechercher dans : Images" />
        <Magnifier />
      </SearchBox>
    </AddressRow>
    <Body>
      <Nav>
        {navItems.map(n => (
          <NavRow key={n.label} href="#" $root={n.root} $spaced={n.spaced} $selected={n.selected}>
            {n.icon}
            <NavLabel>{n.label}</NavLabel>
            {n.pin && <PinIcon size={11} />}
          </NavRow>
        ))}
      </Nav>
      <Files>
        {files.map(f => (
          <FileItem key={f.name}>
            <BigFolder pictures={f.pictures} />
            {f.name}
          </FileItem>
        ))}
      </Files>
    </Body>
    <StatusBar>
      6 élément(s)
      <ViewButtons>
        <ViewButton aria-label="Détails"><ListViewIcon /></ViewButton>
        <ViewButton $on aria-label="Grandes icônes"><PictureIcon size={14} /></ViewButton>
      </ViewButtons>
    </StatusBar>
  </Explorer>
)

const App = () => (
  <>
    <GlobalStyle />
    <Desktop>
      <ChromeWindow />
      <ExplorerWindow />
      <Taskbar>
        <StartButton aria-label="Démarrer"><WindowsIcon /></StartButton>
        <Cortana>
          <svg width="22" height="22" viewBox="0 0 22 22"><circle cx="11" cy="11" r="9" fill="none" stroke="#fff" strokeWidth="3" /></svg>
          <SearchInput $hint="#a3a3a3" aria-label="Recherche Windows" placeholder="Taper ici pour rechercher" />
          <MicIcon />
        </Cortana>
        <Grip />
        <TaskButton $active aria-label="Explorateur"><FilesTask /></TaskButton>
        <TaskButton aria-label="GIMP"><GimpIcon /></TaskButton>
        <RunningButton aria-label="Chrome"><ChromeIcon /></RunningButton>
        <RunningButton aria-label="Stellarium"><StellariumIcon /></RunningButton>
        <Tray>
          <IconButton $w={32} $h={40} aria-label="Aide"><TrayHelp /></IconButton>
          <IconButton $w={24} $h={40} aria-label="Icônes cachées"><Chevron dir="up" size={14} color="#fff" w={0.8} /></IconButton>
          <IconButton $w={25} $h={40} aria-label="Batterie"><BatteryIcon /></IconButton>
          <IconButton $w={24} $h={40} aria-label="Wi-Fi"><WifiIcon /></IconButton>
          <IconButton $w={24} $h={40} aria-label="Volume"><VolumeIcon /></IconButton>
          <Clock>12:36<br />10/07/2019</Clock>
          <IconButton $w={38} $h={40} aria-label="Notifications"><NoticeIcon /></IconButton>
          <ShowDesktop aria-label="Bureau" />
        </Tray>
      </Taskbar>
    </Desktop>
  </>
)

export default App
